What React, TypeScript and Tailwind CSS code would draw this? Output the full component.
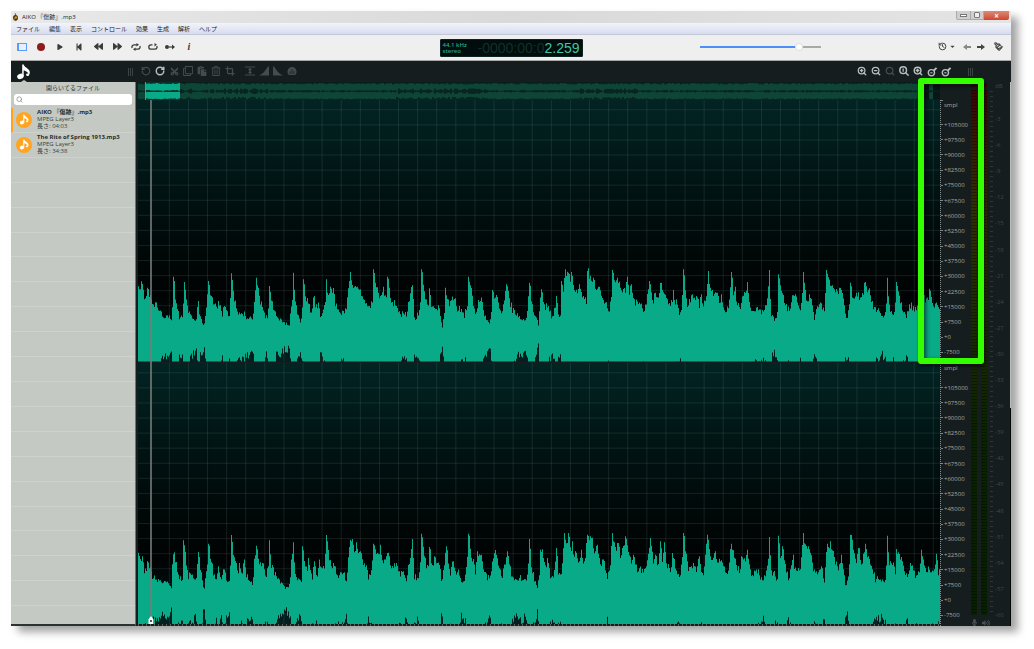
import type { ReactNode } from "react";
import {
  FaBackward, FaCut, FaForward, FaPlay, FaRegClone, FaRegTrashAlt, FaStepBackward,
  FaCaretDown, FaPaste, FaMicrophone, FaVolumeUp,
} from "react-icons/fa";
import { Crop, History, RotateCcw, RotateCw, Search, ZoomIn, ZoomOut, Paintbrush } from "lucide-react";

type Segment = { offset: number; zero: number; points: number[] };

const LEFT: Segment[] = [
  { offset: -24, zero: 260, points: [25,120,35,105,45,155,53,115,62,150,75,165,90,175,100,195,115,195,124,210,128,150,131,82,137,150,148,205,158,190,163,98,170,165,185,205,198,220,205,155,210,200,222,230,230,170,236,95,243,140,250,155,262,180,266,155,275,195,284,170,298,200,306,72,312,150,325,190,340,190,350,210,360,205,368,215,374,150,380,85,388,145,395,170,413,210,418,110,425,150,438,200,455,215,478,230,483,170,488,150,490,70,495,160,510,220,516,205,520,90,526,140,535,165,545,190,552,145,560,180,565,160,572,205,585,170,590,90,594,150,603,112,610,125,617,170,635,190,650,170,661,68,668,110,690,125,700,145,720,180,728,150,732,60,738,110,750,145,760,112,768,150,774,82,780,145,795,165,810,185] },
  { offset: 786, zero: 260, points: [0,192,20,200,28,145,38,108,42,205,47,210,55,190,62,165,66,60,71,115,78,160,85,170,89,117,93,165,108,175,117,168,122,205,127,235,132,200,137,115,143,155,150,165,158,142,166,150,172,178,185,178,192,195,202,175,207,82,214,125,222,175,228,190,236,152,245,145,252,195,262,212,270,220,275,190,277,122,283,150,290,137,298,175,305,190,312,150,321,105,328,155,340,185,350,195,368,212,380,205,385,150,390,100,396,165,415,225,420,150,424,120,432,165,447,180,455,210,463,185,469,140,474,185,482,200,486,95,490,130,492,100,497,60,503,80,507,70,511,100,516,68,522,115,530,130,540,105,546,150,555,150,560,160,564,65,570,80,578,100,582,85,586,125,595,112,603,130,612,165,620,165,628,180,634,150,638,62,645,110,652,85,662,120,675,125,682,82,688,130,695,105,703,155,715,160,735,180,745,120,749,95,756,140,760,155,766,130,772,155,778,120,785,100,790,130,800,155,815,160,821,122,826,170,830,150,838,190] },
  { offset: 1566, zero: 260, points: [63,185,68,130,71,60,76,115,82,160,90,150,98,135,105,150,112,145,118,165,124,135,130,165,138,165,145,65,150,115,160,135,172,130,180,155,185,135,190,175,200,180,207,175,211,115,215,68,220,125,226,112,230,155,240,170,248,140,258,125,262,98,268,165,278,185,290,175,300,180,312,195,320,160,328,62,333,190,343,210,352,185,356,75,362,120,370,140,375,170,390,180,396,145,405,140,413,165,423,185,428,110,430,68,436,130,442,155,450,135,458,180,463,210,470,175,480,165,493,180,499,62,506,90,515,105,525,120,535,130,540,115,550,150,556,195,563,205,568,160,571,100,580,150,590,130,600,145,608,140,614,100,620,120,630,120,635,160,645,185,655,185,668,205,678,190,683,85,687,175,700,195,706,165,711,98,718,145,728,180,740,205,748,165,757,170,765,180,775,175,790,140,797,150,803,155,809,118,816,150,822,175,830,160,838,175,842,180] },
];

const RIGHT: Segment[] = [
  { offset: -24, zero: 238, points: [25,108,33,120,38,110,44,160,54,125,62,150,66,170,78,182,90,182,100,188,112,190,124,205,128,120,133,98,138,130,145,165,158,185,162,62,168,120,175,170,188,165,197,185,207,97,211,150,218,185,222,215,228,155,233,130,236,72,242,120,250,155,258,185,265,140,274,180,283,150,290,190,298,185,303,90,306,46,310,110,318,135,325,165,330,130,335,170,343,120,350,170,368,195,374,110,380,78,386,130,400,140,408,170,414,150,418,62,423,135,430,150,445,180,468,205,480,195,483,130,490,68,495,160,505,180,515,185,519,80,524,120,532,160,537,115,545,180,555,125,560,175,568,120,575,155,583,140,590,46,596,110,605,130,615,150,625,165,640,160,650,185,656,110,661,60,666,85,668,58,674,100,680,68,684,105,692,95,698,135,710,140,715,180,725,155,732,72,738,90,745,110,751,75,755,125,765,120,772,100,780,125,790,145,800,130] },
  { offset: 786, zero: 238, points: [0,160,10,155,20,180,25,140,32,100,38,58,42,165,55,175,62,110,66,42,72,90,80,150,86,140,90,82,95,145,105,110,113,140,120,140,125,195,130,160,136,100,140,80,146,130,150,160,160,125,166,165,175,150,185,188,195,180,202,110,207,42,213,110,222,120,225,180,233,95,240,110,245,105,250,160,270,180,277,135,285,100,292,115,300,155,307,165,315,130,323,95,328,130,335,165,348,185,360,175,380,185,385,120,390,58,395,150,412,200,418,160,423,90,430,105,437,145,444,115,450,175,462,165,470,85,475,160,482,175,487,120,493,40,500,70,507,40,512,95,517,65,522,125,528,95,535,130,544,90,550,135,557,100,562,45,568,70,573,50,578,60,582,115,593,75,600,130,610,120,622,175,630,150,633,90,637,40,643,75,650,85,656,70,663,115,672,70,677,50,684,80,692,125,700,105,712,145,738,150,745,110,753,55,759,130,766,105,774,140,781,65,787,125,794,68,800,130,812,150,819,100,825,135,838,175] },
  { offset: 1566, zero: 238, points: [60,170,66,130,71,40,77,90,84,140,92,150,100,130,110,150,118,110,125,165,133,150,138,90,144,45,150,100,158,125,165,100,175,125,187,125,195,160,205,150,210,95,216,72,222,105,228,135,240,155,246,110,255,120,262,90,268,140,277,165,290,150,310,185,318,150,325,110,329,52,333,150,352,175,356,48,361,120,369,80,375,130,385,175,395,140,400,105,404,145,420,150,426,85,430,40,436,80,445,85,455,105,462,160,478,150,486,140,493,185,498,100,504,72,512,75,520,105,528,130,536,145,544,105,550,140,556,200,563,185,568,140,572,45,578,60,583,110,590,120,597,85,603,130,610,110,616,72,622,110,630,130,637,145,645,175,665,182,678,175,682,48,687,130,700,130,706,155,711,88,718,100,730,140,742,175,752,130,765,165,780,155,785,90,790,115,800,150,815,155,825,145,829,102,835,160,842,155] },
];

const W = 2406;
const H = 786;
const ZERO = 709;

function noise(n: number) {
  const s = Math.sin(n * 12.9898) * 43758.5453;
  return s - Math.floor(s);
}

function envelope(segments: Segment[], seed: number) {
  const pts: [number, number][] = [];
  segments.forEach((s) => {
    for (let i = 0; i < s.points.length; i += 2) pts.push([s.points[i] + s.offset, s.zero - s.points[i + 1]]);
  });
  const top: string[] = [];
  const bottom: string[] = [];
  let k = 0;
  for (let x = 1; x <= W; x += 3) {
    while (k < pts.length - 2 && pts[k + 1][0] < x) k++;
    const [x0, y0] = pts[k];
    const [x1, y1] = pts[k + 1];
    const t = Math.min(1, Math.max(0, (x - x0) / (x1 - x0)));
    // keep the full height of a local peak that falls between two columns
    const isPeak = k > 0 && x1 - x < 3 && k + 2 < pts.length && y1 > y0 && y1 > pts[k + 2][1];
    const level = isPeak ? y1 : y0 + (y1 - y0) * t;
    const spread = level > 60 ? 24 : 10;
    const up = isPeak ? level : level + (noise(x + seed) - 0.55) * spread;
    const down = level + (noise(x * 3 + seed + 7) - 0.5) * 30 + 2;
    const yt = Math.round(ZERO - up);
    const yb = Math.min(H, Math.round(ZERO + down));
    top.push(`L${x - 1} ${yt}H${x + 2}`);
    bottom.unshift(`L${x + 2} ${yb}H${x - 1}`);
  }
  return `M0 ${ZERO}${top.join("")}L${W} ${ZERO}${bottom.join("")}Z`;
}

const verticals = Array.from({ length: 41 }, (_, i) => 94 + i * 57.3);
const horizontals = Array.from({ length: 17 }, (_, i) => ZERO + 45.3 - i * 45.3);

function Track({ segments, seed }: { segments: Segment[]; seed: number }) {
  return (
    <div className="relative min-h-[200px] flex-1 bg-linear-to-b from-[#022423] via-[#000303] via-75% to-[#012120]">
      <svg className="absolute inset-0 size-full" viewBox={`0 0 ${W} ${H}`} preserveAspectRatio="none">
        <g stroke="#8fb8b0" strokeOpacity="0.14" strokeWidth="3">
          {verticals.map((x) => <line key={x} x1={x} x2={x} y1="0" y2={H} />)}
          {horizontals.map((y) => <line key={y} x1="0" x2={W} y1={y} y2={y} />)}
        </g>
        <path d={envelope(segments, seed)} fill="#08aa88" />
      </svg>
    </div>
  );
}

function Overview() {
  const gaps: ReactNode[] = [];
  for (let x = 0; x < 802; x += 2) {
    const a = noise(x + 3);
    const busy = (x > 255 && x < 350) || (x > 440 && x < 500) || (x > 40 && x < 130) ? 1.5 : 0.6;
    const h = 0.6 + a * 1.6 * busy;
    gaps.push(<rect key={x} x={x} y={9.5 - h} width="2" height={h * 2 - 0.5} />);
    gaps.push(<rect key={`t${x}`} x={x} y="0" width="2" height={1 + noise(x + 9) * 1.5} />);
    gaps.push(<rect key={`b${x}`} x={x} y={17.3 - noise(x + 5) * 1.6 * busy} width="2" height="3" />);
  }
  return (
    <svg className="block h-[18px] w-full bg-[#091615]" viewBox="0 0 802 18" preserveAspectRatio="none">
      <rect x="0" y="1" width="786" height="17" fill="#0e4537" />
      <rect x="791" y="1" width="4" height="17" fill="#0e4537" />
      <rect x="7" y="0" width="35" height="18" fill="#08aa88" />
      <g fill="#07201b" fillOpacity="0.85">{gaps}</g>
      <rect x="7" y="2" width="35" height="6" fill="#08aa88" />
      <rect x="7" y="10" width="35" height="6" fill="#08aa88" />
      <rect x="7" y="0" width="1" height="18" fill="#6f8884" />
    </svg>
  );
}

const SCALE = ["+105000", "+97500", "+90000", "+82500", "+75000", "+67500", "+60000", "+52500", "+45000", "+37500", "+30000", "+22500", "+15000", "+7500", "+0", "-7500"];

function Scale() {
  return (
    <div className="flex flex-1 flex-col border-l border-dotted border-[#8a9291] pb-[3px] text-[6px] leading-none text-[#a3a9a8]">
      <div className="flex h-[17px] flex-none items-start gap-px">
        <span className="h-px w-[2px] bg-[#7b8382]" />
        <span className="pt-[2px]">smpl</span>
      </div>
      {SCALE.map((s) => (
        <div key={s} className="flex flex-1 items-center gap-px">
          <span className="h-px w-[2px] bg-[#7b8382]" />
          {s}
        </div>
      ))}
    </div>
  );
}

const DB = Array.from({ length: 20 }, (_, i) => `-${(i + 1) * 3}`);

function Meter() {
  return (
    <div className="flex w-[6px] flex-col gap-[3px]">
      <div className="h-[4px] bg-[#2b0609]" />
      <div className="flex-1 bg-[repeating-linear-gradient(to_bottom,rgba(0,0,0,0.35)_0px,rgba(0,0,0,0.35)_1px,transparent_1px,transparent_3px),linear-gradient(to_bottom,#3b0507_0%,#3a1703_8%,#332f03_22%,#1f2c02_42%,#0a2300_65%,#062000_100%)]" />
    </div>
  );
}

function NoteIcon({ className }: { className: string }) {
  return (
    <svg viewBox="0 0 16 16" className={className} fill="currentColor">
      <ellipse cx="4.4" cy="12.4" rx="3.3" ry="2.6" transform="rotate(-20 4.4 12.4)" />
      <path d="M6.2 0.6H7.7C8.2 3.6 13.6 4.6 13.8 8.2C13.9 9.4 13.4 10.6 12.6 11.4C12.7 9 11 7.2 7.7 6.2V12.4H6.2Z" />
      <ellipse cx="11.6" cy="10.8" rx="1.5" ry="1.2" />
    </svg>
  );
}

function Arrow({ className }: { className: string }) {
  return (
    <svg viewBox="0 0 8 6" className={className} fill="currentColor">
      <path d="M0 1.9H4V0L8 3 4 6V4.1H0Z" />
    </svg>
  );
}

function LoopIcon({ mark }: { mark?: boolean }) {
  return (
    <svg viewBox="0 0 10 8" className="h-[8px] w-[10px]" fill="none" stroke="currentColor" strokeWidth="1.3">
      <path d={mark ? "M4.5 1.8H3A2.2 2.2 0 0 0 3 6.2H7A2.2 2.2 0 0 0 8.8 3" : "M6 1.8H3A2.2 2.2 0 0 0 1.2 5M4 6.2H7A2.2 2.2 0 0 0 8.8 3"} />
      <path d={mark ? "M6.5 0 9 1.8 6.5 3.6Z" : "M5.5 0 8 1.8 5.5 3.6ZM4.5 4.4 2 6.2 4.5 8Z"} fill="currentColor" stroke="none" />
    </svg>
  );
}

function Tool({ label, children, dim, className = "" }: { label: string; children: ReactNode; dim?: boolean; className?: string }) {
  return (
    <button type="button" aria-label={label} className={`flex h-[14px] w-[14px] flex-none items-center justify-center ${dim ? "text-[#454d4c]" : "text-[#b9bfbe]"} ${className}`}>
      {children}
    </button>
  );
}

function Play({ label, children }: { label: string; children: ReactNode }) {
  return <button type="button" aria-label={label} className="flex h-[14px] w-[18px] flex-none items-center justify-center text-[#3c3c3c]">{children}</button>;
}

function EyeZoom() {
  return (
    <svg viewBox="0 0 12 12" className="size-[11px]" fill="none" stroke="currentColor" strokeWidth="1.5">
      <circle cx="4.8" cy="7.4" r="3.4" />
      <path d="M7.3 5.2 L10.4 2.1" strokeWidth="2" />
      <path d="M3.6 7.4 H6" strokeWidth="1.2" />
    </svg>
  );
}

function Grip() {
  return (
    <span className="flex h-[8px] w-[14px] justify-center gap-px">
      <i className="w-px bg-[#3b4342]" /><i className="w-px bg-[#3b4342]" /><i className="w-px bg-[#3b4342]" />
    </span>
  );
}

function FileRow({ name, length, active }: { name: string; length: string; active?: boolean }) {
  return (
    <li className={`flex min-h-[20px] flex-1 items-center gap-[5px] border-b border-l-2 border-b-[#cdd3cc] pl-[3px] ${active ? "border-l-[#ffa31a]" : "border-l-transparent"}`}>
      <span className="flex size-[16px] flex-none items-center justify-center rounded-full bg-[#ffa51f] text-white">
        <NoteIcon className="size-[11px]" />
      </span>
      <span className="flex flex-col text-[6px] leading-[7px] whitespace-nowrap text-[#3b3f3b]">
        <b className="text-[#2b2e2b]">{name}</b>
        <span>MPEG Layer3</span>
        <span>長さ: {length}</span>
      </span>
    </li>
  );
}

const MENUS = ["ファイル", "編集", "表示", "コントロール", "効果", "生成", "解析", "ヘルプ"];

export default function App() {
  return (
    <div className="flex min-h-screen flex-col bg-white pt-[11px] pr-[23px] pb-[23px] pl-[11px] font-['Open_Sans','Noto_Sans_CJK_JP',sans-serif]">
      <div className="relative flex flex-1 flex-col bg-[#151d1e] shadow-[7px_6px_8px_rgba(0,0,0,0.36)]">
        <header className="flex h-[12px] flex-none items-center bg-linear-to-r from-[#e9e9e9] via-[#d9d9d9] to-[#e4e4e4] pr-[2px] pl-[1px] text-[6px] leading-none text-[#222]">
          <svg viewBox="0 0 8 10" className="mr-[3px] h-[8px] w-[7px]">
            <ellipse cx="4" cy="6" rx="3" ry="3.6" fill="#3a2a10" />
            <path d="M3 0 L5 1.4 L3.6 3 Z" fill="#555" />
            <circle cx="4.4" cy="5.6" r="1.6" fill="#e09a1c" />
            <circle cx="2.6" cy="7.5" r="1" fill="#c87d10" />
          </svg>
          <h1>AIKO 『傷跡』.mp3</h1>
          <div className="ml-auto flex h-[9px] self-start">
            <button type="button" aria-label="Minimize" className="flex w-[15px] items-center justify-center rounded-bl-[2px] border border-t-0 border-[#aaa] bg-[#cfcfcf]">
              <i className="h-[3px] w-[7px] border border-[#777] bg-white" />
            </button>
            <button type="button" aria-label="Restore" className="flex w-[13px] items-center justify-center border border-t-0 border-l-0 border-[#aaa] bg-[#cfcfcf]">
              <i className="size-[6px] rounded-[1px] border border-[#777] bg-[#eee]" />
            </button>
            <button type="button" aria-label="Close" className="flex w-[25px] items-center justify-center rounded-br-[2px] bg-linear-to-b from-[#d98a78] to-[#d0452a] text-[8px] leading-none font-bold text-white">
              ×
            </button>
          </div>
        </header>

        <nav className="flex h-[12px] flex-none items-center gap-[9px] border-b border-[#c3c9d9] bg-linear-to-b from-[#f2f4fa] to-[#d7dcef] pl-[5px] text-[6px] leading-none text-[#222]">
          {MENUS.map((m) => <button type="button" key={m} className="whitespace-nowrap">{m}</button>)}
        </nav>

        <div className="grid h-[26px] flex-none grid-cols-[1fr_auto_1fr] items-center border-b border-[#a8a8a8] bg-[#efefef]">
          <div className="flex items-center gap-px pb-[2px] pl-[2px]">
            <Play label="Panel"><i className="h-[8px] w-[10px] border border-l-2 border-[#5b9bf5] bg-[#e6efff]" /></Play>
            <Play label="Record"><i className="size-[8px] rounded-full bg-[#8e1c1c]" /></Play>
            <Play label="Play"><FaPlay className="size-[6px]" /></Play>
            <Play label="Start"><FaStepBackward className="size-[8px]" /></Play>
            <Play label="Rewind"><FaBackward className="size-[9px]" /></Play>
            <Play label="Forward"><FaForward className="size-[9px]" /></Play>
            <Play label="Loop"><LoopIcon /></Play>
            <button type="button" aria-label="Loop selection" className="flex w-[14px] items-center justify-center text-[#3c3c3c]"><LoopIcon mark /></button>
            <Play label="Play mode">
              <svg viewBox="0 0 10 6" className="h-[6px] w-[10px]"><circle cx="2" cy="3" r="2" fill="currentColor" /><path d="M4 3H8" stroke="currentColor" strokeWidth="1.2" /><path d="M7 .6 10 3 7 5.4Z" fill="currentColor" /></svg>
            </Play>
            <Play label="Information"><span className="font-['Liberation_Serif',serif] text-[10px] leading-none font-bold italic">i</span></Play>
          </div>

          <div className="flex h-[18px] w-[143px] items-center justify-between rounded-[1px] border border-[#0c2522] bg-[#000d0c] px-[2px] text-[#2ba586]">
            <div className="text-[6px] leading-[6px] font-semibold whitespace-nowrap">
              44.1 kHz<br />stereo
            </div>
            <div className="font-['Liberation_Sans',sans-serif] text-[14px] leading-none whitespace-nowrap text-[#45c49f]">
              <span className="text-[#12302b]">-0000:00:0</span>2.259
            </div>
          </div>

          <div className="flex items-center justify-end pb-[2px]">
            <input
              type="range"
              aria-label="Volume"
              defaultValue={84}
              className="mr-[117px] h-[8px] w-[121px] appearance-none bg-[linear-gradient(to_right,#4a90f8_81%,#a9a9a9_81%)] bg-[length:100%_2px] bg-center bg-no-repeat [&::-webkit-slider-thumb]:size-[8px] [&::-webkit-slider-thumb]:appearance-none [&::-webkit-slider-thumb]:rounded-full [&::-webkit-slider-thumb]:border [&::-webkit-slider-thumb]:border-[#ddd] [&::-webkit-slider-thumb]:bg-white"
            />
            <button type="button" aria-label="History" className="mr-[7px] flex items-center gap-[2px] text-[#444]">
              <History className="size-[9px]" strokeWidth={2.6} /><FaCaretDown className="size-[7px]" />
            </button>
            <button type="button" aria-label="Back" className="mr-[6px] text-[#888]"><Arrow className="h-[6px] w-[8px] rotate-180" /></button>
            <button type="button" aria-label="Next" className="mr-[9px] text-[#444]"><Arrow className="h-[6px] w-[8px]" /></button>
            <button type="button" aria-label="Theme" className="mr-[8px] text-[#444]"><Paintbrush className="size-[9px] -scale-x-100" strokeWidth={3} /></button>
          </div>
        </div>

        <div className="flex h-[21px] flex-none items-center bg-[#151d1e]">
          <div className="flex w-[112px] flex-col items-start self-end pl-[5px] text-white">
            <NoteIcon className="size-[16px]" />
            <svg viewBox="0 0 6 2" className="ml-[5px] h-[2px] w-[6px]" fill="#c4cac3"><path d="M3 0 6 2H0Z" /></svg>
          </div>
          <Grip />
          <div className="ml-[2px] flex items-center pb-px">
            <Tool label="Undo" dim><RotateCcw className="size-[10px]" strokeWidth={3} /></Tool>
            <Tool label="Redo"><RotateCw className="size-[10px]" strokeWidth={3.5} /></Tool>
            <Tool label="Cut" dim><FaCut className="size-[9px] -rotate-90" /></Tool>
            <Tool label="Copy" dim><FaRegClone className="size-[10px]" /></Tool>
            <Tool label="Paste" dim><FaPaste className="size-[10px]" /></Tool>
            <Tool label="Delete" dim><FaRegTrashAlt className="size-[10px]" /></Tool>
            <Tool label="Trim" dim><Crop className="size-[10px]" strokeWidth={3} /></Tool>
            <Tool label="Amplify" dim className="ml-[6px]">
              <svg viewBox="0 0 10 10" className="size-[10px]" fill="none" stroke="currentColor" strokeWidth="1.2"><path d="M0 1H10M0 9H10M5 3V7M3.6 4.2 5 2.6 6.4 4.2M3.6 5.8 5 7.4 6.4 5.8" /></svg>
            </Tool>
            <Tool label="Fade in" dim><svg viewBox="0 0 10 10" className="size-[10px]" fill="currentColor"><path d="M0 9.5C4 8 6 5 9 0.5H10V9.5Z" /></svg></Tool>
            <Tool label="Fade out" dim><svg viewBox="0 0 10 10" className="size-[10px]" fill="currentColor"><path d="M0 0.5H1C4 5 6 8 10 9.5H0Z" /></svg></Tool>
            <Tool label="Normalize" dim>
              <svg viewBox="0 0 10 10" className="size-[10px]"><path d="M1.8 9A4.6 4.6 0 1 1 8.2 9Z" fill="currentColor" /><path d="M3 8V5.5M5 8V3M7 8V5" stroke="#151d1e" strokeWidth=".8" /></svg>
            </Tool>
          </div>
          <div className="mr-[58px] ml-auto flex items-center pb-px">
            <Tool label="Zoom in"><ZoomIn className="size-[10px]" strokeWidth={3} /></Tool>
            <Tool label="Zoom out"><ZoomOut className="size-[10px]" strokeWidth={3} /></Tool>
            <Tool label="Zoom selection" dim><Search className="size-[10px]" strokeWidth={3} /></Tool>
            <Tool label="Zoom fit">
              <svg viewBox="0 0 24 24" className="size-[10px]" fill="none" stroke="currentColor" strokeWidth="3.5"><circle cx="10" cy="10" r="8" /><path d="M16 16 23 23" /><path d="M10 6V14" strokeWidth="3" /></svg>
            </Tool>
            <Tool label="Zoom vertical in"><ZoomIn className="size-[10px]" strokeWidth={3.5} /></Tool>
            <Tool label="Zoom horizontal"><EyeZoom /></Tool>
            <Tool label="Zoom full"><EyeZoom /></Tool>
          </div>
          <div className="-ml-[48px] flex w-[48px] justify-start"><Grip /></div>
        </div>

        <div className="flex flex-1">
          <aside className="flex w-[125px] flex-none flex-col border-r border-b-2 border-[#6d7573] border-b-[#2b3332] bg-[#c4cac3] pb-[18px]">
            <h2 className="flex h-[12px] flex-none items-center justify-center text-[6px] leading-none text-[#333]">開らいてるファイル</h2>
            <label className="mx-[3px] flex h-[11px] flex-none items-center rounded-[3px] bg-white px-[2px]">
              <Search className="size-[7px] text-[#8a8a8a]" strokeWidth={2.5} />
              <input type="search" aria-label="Search files" className="min-w-0 flex-1 text-[6px] leading-none outline-none" />
            </label>
            <ul className="mt-[3px] flex flex-1 flex-col border-b border-[#cdd3cc]">
              <FileRow name="AIKO 『傷跡』.mp3" length="04:03" active />
              <FileRow name="The Rite of Spring 1913.mp3" length="34:38" />
              {Array.from({ length: 18 }, (_, i) => <li key={i} className="min-h-[20px] flex-1 border-b border-[#cdd3cc] last:border-b-0" />)}
            </ul>
          </aside>

          <main className="flex flex-1 flex-col pl-[2px]">
            <Overview />
            <div className="relative flex flex-1 flex-col gap-px">
              <Track segments={LEFT} seed={0} />
              <Track segments={RIGHT} seed={40} />
              <div className="absolute inset-y-0 left-[12px] w-[2px] bg-[#757c7b]/80" />
              <svg viewBox="0 0 6 8" className="absolute bottom-0 left-[10px] h-[8px] w-[6px]"><path d="M3 0 5.5 3.5V8H.5V3.5Z" fill="#fff" /><circle cx="3" cy="5" r="1" fill="#222" /></svg>
            </div>
            <div className="h-[2px] bg-[repeating-linear-gradient(to_right,#59605f_0px,#59605f_1px,#151d1e_1px,#151d1e_4px)]" />
          </main>

          <div className="flex w-[31px] flex-none flex-col pt-[18px]">
            <Scale />
            <Scale />
          </div>

          <div className="flex w-[19px] flex-none flex-col pt-px">
            <div className="flex flex-1 gap-[4px]"><Meter /><Meter /></div>
            <div className="flex h-[11px] items-center justify-between pt-[4px] text-[#4a5251]">
              <FaMicrophone className="size-[7px]" /><FaVolumeUp className="size-[8px]" />
            </div>
          </div>

          <div className="flex w-[20px] flex-none pb-[7px]">
            <div className="mt-[9px] mb-[3px] w-[3px] bg-[repeating-linear-gradient(to_bottom,#2e3635_0px,#2e3635_1px,transparent_1px,transparent_5px)]" />
            <div className="flex flex-1 flex-col justify-between pl-[2px] text-[6px] leading-[8px] text-[#3f4746]">
              <span className="mb-[7px]">dB</span>
              {DB.map((d) => <span key={d}>{d}</span>)}
            </div>
          </div>
          <div className="w-px flex-none bg-linear-to-b from-[#b9bdbc] from-60% to-[#050505] to-60%" />
        </div>

        <div className="pointer-events-none absolute top-[67px] right-[27px] h-[286px] w-[66px] rounded-[3px] border-6 border-[#33ff00] shadow-[1px_2px_3px_rgba(0,0,0,0.6),inset_2px_2px_4px_rgba(0,0,0,0.6)]" />
      </div>
    </div>
  );
}
